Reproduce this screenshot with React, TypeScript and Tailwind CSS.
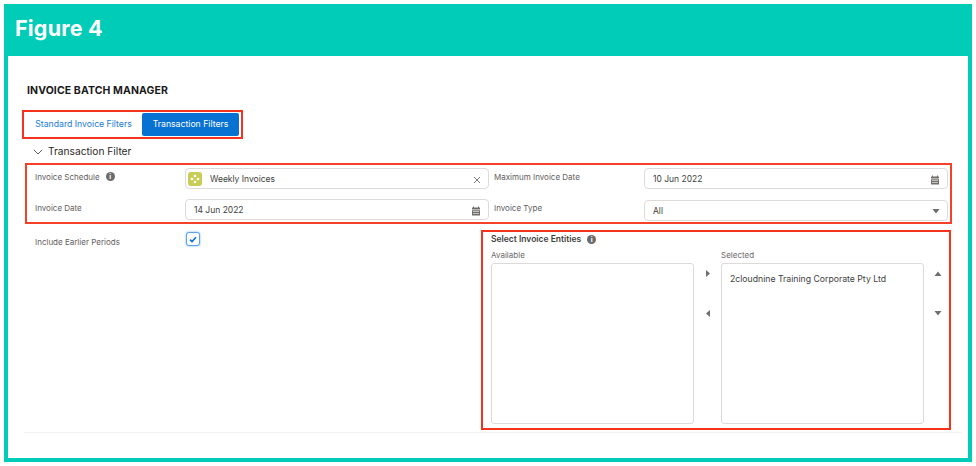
import React from "react";

const font = { fontFamily: '"Inter", "Liberation Sans", sans-serif' };

function Info({ className = "" }: { className?: string }) {
  return (
    <span className={`flex h-[9px] w-[9px] shrink-0 items-center justify-center rounded-full bg-[#6b6b6b] text-[7px] font-bold leading-none text-white ${className}`}>
      i
    </span>
  );
}

function Calendar() {
  return (
    <svg width="10" height="10" viewBox="0 0 10 10" className="shrink-0" fill="#706e6b">
      <rect x="2" y="0.5" width="1" height="1.5" />
      <rect x="7" y="0.5" width="1" height="1.5" />
      <rect x="1" y="1.5" width="8" height="2" rx="0.5" />
      <path d="M1 4.2h8V9a.6.6 0 0 1-.6.6H1.6A.6.6 0 0 1 1 9z" />
      <g fill="#fff">
        <rect x="2.4" y="5" width="1.2" height="1" />
        <rect x="4.4" y="5" width="1.2" height="1" />
        <rect x="6.4" y="5" width="1.2" height="1" />
        <rect x="2.4" y="7" width="1.2" height="1" />
        <rect x="4.4" y="7" width="1.2" height="1" />
        <rect x="6.4" y="7" width="1.2" height="1" />
      </g>
    </svg>
  );
}

function Tri({ dir }: { dir: "up" | "down" | "left" | "right" }) {
  const pts = {
    up: "0.5,7 4,2.5 7.5,7",
    down: "0.5,2 7.5,2 4,6.5",
    left: "6,1 6,8 2,4.5",
    right: "2,1 2,8 6,4.5",
  }[dir];
  return (
    <svg width="8" height="9" viewBox="0 0 8 9" fill="#706e6b">
      <polygon points={pts} />
    </svg>
  );
}

function Field({ children }: { children: React.ReactNode }) {
  return (
    <div className="flex h-[21px] w-full items-center justify-between rounded-[4px] border border-[#dddbda] bg-white pl-[8px] pr-[7px] pt-[2px] text-[8.5px] text-[#3e3e3c]">
      {children}
    </div>
  );
}

export default function App() {
  return (
    <div className="h-[466px] w-[976px] bg-white p-[4px]" style={font}>
      <div className="flex h-[458px] w-[968px] flex-col bg-[#00ccb8]">
        <div className="flex h-[52px] shrink-0 items-center pb-[3px] pl-[11px] text-[21.5px] font-bold tracking-[0.2px] text-white">
          Figure 4
        </div>
        <div className="mx-[4px] mb-[4px] flex-1 bg-white pl-[14px] pt-[28px]">
          <div className="ml-[5px] text-[10.5px] font-bold leading-[13px] tracking-[0.1px] text-[#1a1a1a]">
            INVOICE BATCH MANAGER
          </div>

          <div className="mt-[13px] h-[29px] w-[221px] border-2 border-[#f5331c] bg-white p-[1px]">
            <div className="flex h-[23px] text-[8.7px]">
              <div className="flex w-[117px] items-center justify-center text-[#1b7bd8]">
                Standard Invoice Filters
              </div>
              <div className="flex w-[97px] items-center justify-center rounded-[2px] bg-[#0872d2] text-white">
                Transaction Filters
              </div>
            </div>
          </div>

          <div className="ml-[11px] mt-[5px] flex h-[15px] items-center gap-[5px] text-[10.2px] text-[#2b2826]">
            <svg width="10" height="6" viewBox="0 0 10 6" fill="none" stroke="#5c5c5c" strokeWidth="1">
              <path d="M0.8 0.8 5 5 9.2 0.8" />
            </svg>
            Transaction Filter
          </div>

          <div className="ml-[3px] mt-[4px] h-[61px] w-[927px] border-2 border-[#f5412a] pt-[3px] text-[8px] text-[#5f5e5c]">
            <div className="flex h-[22px]">
              <div className="flex w-[158px] items-start gap-[6px] pl-[8px] pt-[3px]">
                Invoice Schedule <Info className="mt-[1px]" />
              </div>
              <div className="w-[304px]">
                <Field>
                  <span className="flex items-center gap-[8px]">
                    <span className="-ml-[6px] -mt-[2px] flex h-[14px] w-[14px] items-center justify-center rounded-[3px] bg-[#c9cc55]">
                      <svg width="10" height="10" viewBox="0 0 10 10" fill="#fff">
                        <circle cx="5" cy="2" r="1.3" />
                        <circle cx="2" cy="5" r="1.3" />
                        <circle cx="8" cy="5" r="1.3" />
                        <circle cx="5" cy="8" r="1.3" />
                      </svg>
                    </span>
                    Weekly Invoices
                  </span>
                  <svg width="8" height="8" viewBox="0 0 8 8" stroke="#6b6b6b" strokeWidth="0.9">
                    <path d="M1 1 7 7M7 1 1 7" />
                  </svg>
                </Field>
              </div>
              <div className="w-[155px] pl-[5px] pt-[3px]">Maximum Invoice Date</div>
              <div className="w-[304px]">
                <Field>
                  10 Jun 2022
                  <Calendar />
                </Field>
              </div>
            </div>
            <div className="mt-[9px] flex h-[22px]">
              <div className="w-[158px] pl-[8px] pt-[3px]">Invoice Date</div>
              <div className="w-[304px]">
                <Field>
                  14 Jun 2022
                  <Calendar />
                </Field>
              </div>
              <div className="w-[155px] pl-[5px] pt-[3px]">Invoice Type</div>
              <div className="mt-[1px] w-[304px]">
                <Field>
                  All
                  <Tri dir="down" />
                </Field>
              </div>
            </div>
          </div>

          <div className="mt-[6px] flex">
            <div className="flex w-[459px] items-start">
              <div className="w-[150px] pl-[13px] pt-[6px] text-[8px] text-[#5f5e5c]">Include Earlier Periods</div>
              <div className="ml-[14px] mt-[2px] flex h-[14px] w-[14px] items-center justify-center rounded-[3px] border border-[#5aa4ee] bg-white shadow-[0_0_2px_#5aa4ee]">
                <svg width="8" height="7" viewBox="0 0 8 7" fill="none" stroke="#0b6fcf" strokeWidth="1.6">
                  <path d="M1 3.6 3 5.6 7 1.2" />
                </svg>
              </div>
            </div>
            <div className="h-[200px] w-[470px] border-2 border-[#f5331c] pl-[8px] pt-[2px] text-[8px]">
              <div className="flex h-[11px] items-center gap-[6px] text-[8.5px] font-semibold text-[#3e3e3c]">
                Select Invoice Entities <Info />
              </div>
              <div className="mt-[4px] flex">
                <div className="w-[203px]">
                  <div className="h-[12px] leading-[12px] text-[#6b6b6b]">Available</div>
                  <div className="mt-[2px] h-[161px] rounded-[3px] border border-[#dddbda] bg-white" />
                </div>
                <div className="flex w-[27px] flex-col items-center gap-[31px] pt-[20px]">
                  <Tri dir="right" />
                  <Tri dir="left" />
                </div>
                <div className="w-[203px]">
                  <div className="h-[12px] leading-[12px] text-[#6b6b6b]">Selected</div>
                  <div className="mt-[2px] h-[161px] rounded-[3px] border border-[#dddbda] bg-white pl-[8px] pt-[9px] text-[8.7px] text-[#3e3e3c]">
                    2cloudnine Training Corporate Pty Ltd
                  </div>
                </div>
                <div className="flex w-[25px] flex-col items-center gap-[31px] pl-[2px] pt-[20px]">
                  <Tri dir="up" />
                  <Tri dir="down" />
                </div>
              </div>
            </div>
          </div>

          <div className="ml-[2px] mr-[6px] mt-[2px] h-px bg-[#f3f3f3]" />
        </div>
      </div>
    </div>
  );
}
